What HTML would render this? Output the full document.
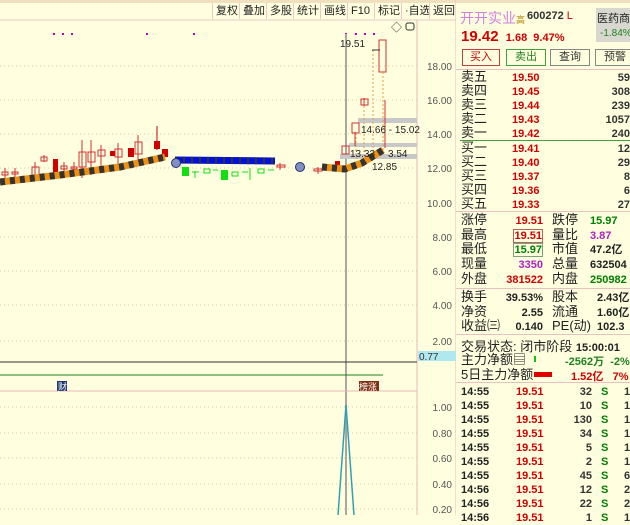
<!DOCTYPE html><html><head><meta charset="utf-8"><style>
body{margin:0;width:630px;height:515px;overflow:hidden;background:#ffffe0;font-family:"Liberation Sans","Noto Sans CJK SC",sans-serif;position:relative}
.a{position:absolute;white-space:nowrap}
.tb{position:absolute;top:3px;height:16px;font-size:11px;line-height:16px;color:#222;border-left:1px solid #e8c8c8;padding:0 3px}
.r{color:#d00000;font-weight:bold}.g{color:#008000;font-weight:bold}.k{color:#222}
.num{font-size:11px;font-weight:bold}
</style></head><body>
<div class="a" style="left:0;top:0;width:630px;height:3px;background:#f0e0c0"></div>
<div class="tb" style="left:212px">复权</div><div class="tb" style="left:239px">叠加</div><div class="tb" style="left:266px">多股</div><div class="tb" style="left:293px">统计</div><div class="tb" style="left:320px">画线</div><div class="tb" style="left:347px">F10</div><div class="tb" style="left:374px">标记</div><div class="tb" style="left:401px">·自选</div><div class="tb" style="left:429px">返回</div>
<svg class="a" style="left:0;top:0" width="456" height="515">
<line x1="0" y1="20" x2="456" y2="20" stroke="#e8c8c8"/>
<line x1="456" y1="0" x2="456" y2="515" stroke="#e8b8b8"/>
<line x1="417" y1="20" x2="417" y2="515" stroke="#e8b8b8"/>
<g stroke="#d8c8a8" stroke-dasharray="1,3">
<line x1="0" y1="66" x2="417" y2="66"/><line x1="0" y1="100" x2="417" y2="100"/><line x1="0" y1="134" x2="417" y2="134"/><line x1="0" y1="168" x2="417" y2="168"/><line x1="0" y1="203" x2="417" y2="203"/><line x1="0" y1="237" x2="417" y2="237"/><line x1="0" y1="271" x2="417" y2="271"/><line x1="0" y1="305" x2="417" y2="305"/><line x1="0" y1="341" x2="417" y2="341"/>
<line x1="0" y1="407" x2="417" y2="407"/><line x1="0" y1="433" x2="417" y2="433"/><line x1="0" y1="458" x2="417" y2="458"/><line x1="0" y1="484" x2="417" y2="484"/><line x1="0" y1="509" x2="417" y2="509"/>
</g>
<g fill="#c000c0"><rect x="53" y="33" width="2" height="2"/><rect x="62" y="33" width="2" height="2"/><rect x="71" y="33" width="2" height="2"/><rect x="146" y="33" width="2" height="2"/><rect x="193" y="33" width="2" height="2"/><rect x="345" y="33" width="2" height="2"/><rect x="355" y="33" width="2" height="2"/><rect x="364" y="33" width="2" height="2"/><rect x="373" y="33" width="2" height="2"/></g>
<line x1="346" y1="34" x2="346" y2="515" stroke="#a8a8a0" stroke-width="2"/>
<line x1="0" y1="362" x2="417" y2="362" stroke="#333"/>
<line x1="0" y1="375" x2="383" y2="375" stroke="#208020"/>
<line x1="0" y1="391" x2="417" y2="391" stroke="#e8b8b8"/>
<rect x="57" y="381" width="10" height="10" fill="#203870"/><text x="58" y="390" font-size="9" fill="#fff">财</text>
<rect x="359" y="381" width="20" height="10" fill="#803010"/><text x="359" y="390" font-size="9" fill="#fff">榜涨</text>
<g fill="#c8c8c8"><rect x="358" y="118" width="59" height="5"/><rect x="349" y="143" width="68" height="4"/><rect x="340" y="154" width="77" height="5"/></g>
<g stroke="#d03030" fill="none" stroke-width="1">
<line x1="5" y1="168" x2="5" y2="178"/><rect x="2" y="172" width="6" height="3"/>
<line x1="15" y1="168" x2="15" y2="178"/><rect x="12" y="172" width="6" height="2"/>
<line x1="35" y1="162" x2="35" y2="180"/><rect x="32" y="167" width="7" height="9"/>
<line x1="44" y1="155" x2="44" y2="162"/><rect x="41" y="157" width="6" height="4"/>
<line x1="64" y1="162" x2="64" y2="176"/><rect x="61" y="166" width="6" height="3"/>
<line x1="74" y1="162" x2="74" y2="176"/><rect x="71" y="167" width="6" height="2"/>
<line x1="82" y1="140" x2="82" y2="178"/><rect x="79" y="152" width="7" height="15"/>
<line x1="91" y1="140" x2="91" y2="175"/><rect x="88" y="152" width="7" height="10"/>
<line x1="101" y1="145" x2="101" y2="170"/><rect x="98" y="150" width="7" height="6"/>
<line x1="118" y1="143" x2="118" y2="167"/><rect x="115" y="149" width="7" height="8"/>
<line x1="138" y1="135" x2="138" y2="160"/><rect x="135" y="142" width="7" height="12"/>
<line x1="280" y1="163" x2="280" y2="170"/><rect x="277" y="165" width="8" height="2"/>
<line x1="318" y1="167" x2="318" y2="174"/><rect x="314" y="169" width="8" height="2"/>
<rect x="342" y="146" width="7" height="8"/>
<line x1="355" y1="132" x2="355" y2="146"/><rect x="352" y="123" width="7" height="10"/>
<line x1="364" y1="98" x2="364" y2="106"/><rect x="361" y="99" width="7" height="6"/>
<line x1="385" y1="100" x2="385" y2="148"/><rect x="379" y="40" width="7" height="32"/>
</g>
<g fill="#d00000"><rect x="53" y="159" width="5" height="13"/><rect x="110" y="151" width="5" height="5"/><rect x="128" y="148" width="6" height="9"/><line x1="157" y1="126" x2="157" y2="150" stroke="#d00000"/><rect x="154" y="141" width="6" height="8"/><rect x="162" y="149" width="6" height="8"/><rect x="335" y="161" width="5" height="6"/></g>
<g stroke="#e8a040" stroke-dasharray="2,2"><line x1="356" y1="133" x2="356" y2="165"/><line x1="364" y1="106" x2="364" y2="162"/><line x1="373" y1="50" x2="373" y2="158"/><line x1="383" y1="72" x2="383" y2="150"/></g>
<line x1="372" y1="50" x2="380" y2="50" stroke="#333"/>
<polyline points="0,182 60,175 120,167 165,157" fill="none" stroke="#f09010" stroke-width="7"/>
<polyline points="0,182 60,175 120,167 165,157" fill="none" stroke="#333" stroke-width="7" stroke-dasharray="5,5"/>
<polyline points="175,160 275,161" fill="none" stroke="#0010e0" stroke-width="7"/>
<polyline points="175,160 275,161" fill="none" stroke="#333" stroke-width="7" stroke-dasharray="2,6"/>
<polyline points="322,167 345,169 362,163 383,150" fill="none" stroke="#f09010" stroke-width="7"/>
<polyline points="322,167 345,169 362,163 383,150" fill="none" stroke="#333" stroke-width="7" stroke-dasharray="5,5"/>
<circle cx="176" cy="163" r="4.5" fill="#8090c0" stroke="#203070"/><circle cx="300" cy="167" r="4.5" fill="#8090c0" stroke="#203070"/>
<g fill="#10e010"><rect x="182" y="167" width="7" height="9"/><rect x="221" y="170" width="7" height="10"/></g>
<g stroke="#10e010" fill="none"><rect x="204" y="169" width="6" height="4"/><line x1="195" y1="171" x2="195" y2="178"/><line x1="192" y1="172" x2="199" y2="172"/><line x1="213" y1="170" x2="218" y2="170"/><rect x="232" y="172" width="6" height="4"/><rect x="258" y="169" width="6" height="4"/><line x1="250" y1="168" x2="250" y2="180"/><line x1="242" y1="172" x2="248" y2="172"/><line x1="268" y1="170" x2="274" y2="170"/></g>
<text x="340" y="47" font-size="10" fill="#222">19.51</text>
<text x="361" y="133" font-size="10" fill="#222">14.66 - 15.02</text>
<text x="350" y="157" font-size="10" fill="#222">13.33</text><text x="388" y="157" font-size="10" fill="#222">3.54</text>
<text x="372" y="170" font-size="10" fill="#222">12.85</text>
<text x="391" y="31" font-size="11" fill="#333">◇</text><rect x="406" y="23" width="8" height="7" fill="none" stroke="#333" rx="2"/>
<g font-size="10" fill="#555" text-anchor="end"><text x="452" y="70">18.00</text><text x="452" y="104">16.00</text><text x="452" y="138">14.00</text><text x="452" y="172">12.00</text><text x="452" y="207">10.00</text><text x="452" y="241">8.00</text><text x="452" y="275">6.00</text><text x="452" y="309">4.00</text><text x="452" y="345">2.00</text>
<text x="452" y="411">1.00</text><text x="452" y="437">0.80</text><text x="452" y="462">0.60</text><text x="452" y="488">0.40</text><text x="452" y="513">0.20</text></g>
<rect x="418" y="351" width="38" height="10" fill="#b0e8f0"/><text x="419" y="360" font-size="10" fill="#333">0.77</text>
<polyline points="338,515 346,405 354,515" fill="none" stroke="#30a0b0" stroke-width="1.5"/>
</svg>
<div class="a" style="left:460px;top:8px;font-size:14px;color:#d080e0">开开实业<span style="font-size:9px;color:#b08000">高</span></div>
<div class="a" style="left:527px;top:10px;font-size:11px;font-weight:bold;color:#333">600272 <span style="color:#d00000;font-weight:normal">L</span></div>
<div class="a" style="left:596px;top:8px;width:34px;height:34px;background:#d8d8d0"></div>
<div class="a" style="left:597px;top:10px;font-size:11px;color:#222">医药商业</div>
<div class="a" style="left:600px;top:28px;font-size:10px;color:#208020">-1.84%</div>
<div class="a r" style="left:461px;top:28px;font-size:15px">19.42 <span style="font-size:11px">&nbsp;1.68 &nbsp;9.47%</span></div>
<div class="a" style="left:462px;top:49px;width:36px;height:15px;border:1px solid #c04040;font-size:11px;color:#c00000;text-align:center;line-height:15px">买入</div>
<div class="a" style="left:506px;top:49px;width:38px;height:15px;border:1px solid #40a040;font-size:11px;color:#208020;text-align:center;line-height:15px">卖出</div>
<div class="a" style="left:550px;top:49px;width:38px;height:15px;border:1px solid #888;font-size:11px;color:#333;text-align:center;line-height:15px">查询</div>
<div class="a" style="left:595px;top:49px;width:38px;height:15px;border:1px solid #888;font-size:11px;color:#333;text-align:center;line-height:15px">预警</div>
<div class="a" style="left:456px;top:69px;width:174px;height:1px;background:#e8c0c0"></div>
<div class="a" style="left:460px;top:140px;width:170px;height:1px;background:#40a040"></div>
<div class="a" style="left:456px;top:211px;width:174px;height:1px;background:#e8c0c0"></div>
<div class="a" style="left:456px;top:288px;width:174px;height:1px;background:#e8c0c0"></div>
<div class="a" style="left:456px;top:334px;width:174px;height:1px;background:#e8c0c0"></div>
<div class="a" style="left:456px;top:382px;width:174px;height:1px;background:#e8c0c0"></div>
<div class="a" style="left:461px;top:70px;line-height:14px;font-size:13px;color:#222">卖五<br>卖四<br>卖三<br>卖二<br>卖一<br><div style="height:1px"></div>买一<br>买二<br>买三<br>买四<br>买五</div>
<div class="a r" style="left:512px;top:71px;line-height:14px;font-size:11px">19.50<br>19.45<br>19.44<br>19.43<br>19.42<br><div style="height:1px"></div>19.41<br>19.40<br>19.37<br>19.36<br>19.33</div>
<div class="a" style="right:0;top:71px;line-height:14px;font-size:11px;font-weight:bold;color:#333;text-align:right">59<br>308<br>239<br>1057<br>240<br><div style="height:1px"></div>12<br>29<br>8<br>6<br>27</div>
<div class="a" style="left:461px;top:213px;line-height:14.7px;font-size:13px;color:#222">涨停<br>最高<br>最低<br>现量<br>外盘</div>
<div class="a num" style="left:500px;top:214px;line-height:14.7px;text-align:right;width:43px"><span class="r">19.51</span><br><span class="r" style="border:1px solid #c06060">19.51</span><br><span class="g" style="border:1px solid #80a080">15.97</span><br><span style="color:#b020c0">3350</span><br><span class="r">381522</span></div>
<div class="a" style="left:552px;top:213px;line-height:14.7px;font-size:13px;color:#222">跌停<br>量比<br>市值<br>总量<br>内盘</div>
<div class="a num" style="left:590px;top:214px;line-height:14.7px;width:45px"><span class="g">15.97</span><br><span style="color:#b020c0">3.87</span><br><span style="color:#222">47.2亿</span><br><span style="color:#222">632504</span><br><span class="g">250982</span></div>
<div class="a" style="left:461px;top:290px;line-height:14.5px;font-size:13px;color:#222">换手<br>净资<br>收益㈢</div>
<div class="a num" style="left:500px;top:291px;line-height:14.5px;text-align:right;width:43px;color:#222">39.53%<br>2.55<br>0.140</div>
<div class="a" style="left:552px;top:290px;line-height:14.5px;font-size:13px;color:#222">股本<br>流通<br>PE(动)</div>
<div class="a num" style="left:597px;top:291px;line-height:14.5px;width:45px;color:#222">2.43亿<br>1.60亿<br>102.3</div>
<div class="a" style="left:461px;top:336px;font-size:13px;color:#222">交易状态: 闭市阶段 <span style="font-size:11px;font-weight:bold">15:00:01</span></div>
<div class="a" style="left:461px;top:352px;font-size:13px;color:#222;line-height:15px">主力净额▤<br>5日主力净额</div>
<div class="a" style="left:534px;top:356px;width:2px;height:6px;background:#10c010"></div>
<div class="a" style="left:534px;top:372px;width:18px;height:5px;background:#e00000"></div>
<div class="a num" style="left:565px;top:353px;color:#208020">-2562万 &nbsp;-2%</div>
<div class="a num" style="left:571px;top:368px;color:#d00000">1.52亿 &nbsp;&nbsp;7%</div>
<div class="a num" style="left:461px;top:385px;line-height:14px;color:#222">14:55<br>14:55<br>14:55<br>14:55<br>14:55<br>14:55<br>14:55<br>14:56<br>14:56<br>14:56</div>
<div class="a num r" style="left:516px;top:385px;line-height:14px">19.51<br>19.51<br>19.51<br>19.51<br>19.51<br>19.51<br>19.51<br>19.51<br>19.51<br>19.51</div>
<div class="a num" style="left:568px;top:385px;line-height:14px;width:24px;text-align:right;color:#333">32<br>10<br>130<br>34<br>5<br>2<br>45<br>12<br>22<br>1</div>
<div class="a num g" style="left:601px;top:385px;line-height:14px">S<br>S<br>S<br>S<br>S<br>S<br>S<br>S<br>S<br>S</div>
<div class="a num" style="left:624px;top:385px;line-height:14px;color:#333">1<br>1<br>1<br>1<br>1<br>1<br>6<br>2<br>2<br>1</div>
</body></html>
